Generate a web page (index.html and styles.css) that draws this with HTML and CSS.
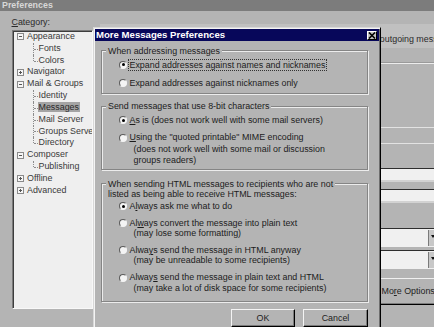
FILE: index.html
```html
<!DOCTYPE html>
<html>
<head>
<meta charset="utf-8">
<title>Preferences</title>
<link rel="stylesheet" href="styles.css">
</head>
<body>
<div class="window">
  <div class="titlebar">Preferences</div>
  <div class="main">
    <div class="sidebar">
      <div class="cat-label"><u>C</u>ategory:</div>
      <div class="tree">
        <div class="node"><span class="exp minus"></span><span class="lbl">Appearance</span></div>
        <div class="kids">
          <div class="leaf"><span class="lbl">Fonts</span></div>
          <div class="leaf"><span class="lbl">Colors</span></div>
        </div>
        <div class="node"><span class="exp plus"></span><span class="lbl">Navigator</span></div>
        <div class="node"><span class="exp minus"></span><span class="lbl">Mail &amp; Groups</span></div>
        <div class="kids">
          <div class="leaf"><span class="lbl">Identity</span></div>
          <div class="leaf"><span class="lbl sel">Messages</span></div>
          <div class="leaf"><span class="lbl">Mail Server</span></div>
          <div class="leaf"><span class="lbl">Groups Server</span></div>
          <div class="leaf"><span class="lbl">Directory</span></div>
        </div>
        <div class="node"><span class="exp minus"></span><span class="lbl">Composer</span></div>
        <div class="kids">
          <div class="leaf"><span class="lbl">Publishing</span></div>
        </div>
        <div class="node"><span class="exp plus"></span><span class="lbl">Offline</span></div>
        <div class="node"><span class="exp plus"></span><span class="lbl">Advanced</span></div>
      </div>
    </div>
    <div class="pane">
      <div class="pane-head"><span class="pane-title">Messages</span><span class="pane-desc">Settings for outgoing messages</span></div>
      <div class="rule"></div>
      <div class="hl hl-a"></div>
      <div class="hl hl-b"></div>
      <div class="field field-a"></div>
      <div class="field field-b"></div>
      <div class="combo combo-a"><span class="combo-text"></span><span class="combo-btn"><span class="tri"></span></span></div>
      <div class="combo combo-b"><span class="combo-text"></span><span class="combo-btn"><span class="tri"></span></span></div>
      <div class="more-btn">Mo<u>r</u>e Options</div>
    </div>
  </div>

  <div class="dialog">
    <div class="dlg-title">
      <span>More Messages Preferences</span>
      <span class="close"><svg width="8" height="7" viewBox="0 0 8 7"><path d="M1 0.5 L7 6.5 M7 0.5 L1 6.5" stroke="#000" stroke-width="1.6"/></svg></span>
    </div>
    <div class="dlg-body">
      <div class="group g1">
        <div class="legend"><span>When addressing messages</span></div>
        <div class="opt"><span class="radio on"></span><div class="txt"><span class="focus">Expand addresses against names and nicknames</span></div></div>
        <div class="opt"><span class="radio"></span><div class="txt">Expand addresses against nicknames only</div></div>
      </div>
      <div class="group g2">
        <div class="legend"><span>Send messages that use 8-bit characters</span></div>
        <div class="opt"><span class="radio on"></span><div class="txt"><u>A</u>s is (does not work well with some mail servers)</div></div>
        <div class="opt"><span class="radio"></span><div class="txt"><u>U</u>sing the "quoted printable" MIME encoding<div class="sub">(does not work well with some mail or discussion</div><div class="sub">groups readers)</div></div></div>
      </div>
      <div class="group g3">
        <div class="legend"><span>When sending HTML messages to recipients who are not<br>listed as being able to receive HTML messages:</span></div>
        <div class="opt"><span class="radio on"></span><div class="txt">A<u>l</u>ways ask me what to do</div></div>
        <div class="opt"><span class="radio"></span><div class="txt">Al<u>w</u>ays convert the message into plain text<div class="sub">(may lose some formatting)</div></div></div>
        <div class="opt"><span class="radio"></span><div class="txt">Alwa<u>y</u>s send the message in HTML anyway<div class="sub">(may be unreadable to some recipients)</div></div></div>
        <div class="opt"><span class="radio"></span><div class="txt">Alway<u>s</u> send the message in plain text and HTML<div class="sub">(may take a lot of disk space for some recipients)</div></div></div>
      </div>
      <div class="buttons">
        <div class="btn btn-ok">OK</div>
        <div class="btn btn-cancel">Cancel</div>
      </div>
    </div>
  </div>
</div>
</body>
</html>
```

FILE: styles.css
```css
* { box-sizing: border-box; }
html, body { margin: 0; padding: 0; overflow: hidden; }
body {
  width: 434px; height: 327px;
  background: #b4b4b4;
  font-family: "Liberation Sans", Arial, sans-serif;
  font-size: 8.9px;
  color: #1c1c1c;
}
u { text-decoration-thickness: 1px; text-underline-offset: 1px; }

.window { position: relative; width: 434px; height: 327px; overflow: hidden; background: #b4b4b4; }

.titlebar {
  height: 11px; line-height: 11px;
  background: #7c7c7c; color: #d8d8d8;
  font-weight: bold; padding-left: 2px;
}

.main { display: flex; }

/* ---------- sidebar ---------- */
.sidebar { flex: 0 0 93px; padding: 4.5px 0 0 11.5px; }
.cat-label { line-height: 12px; height: 14.5px; color: #2a2a2a; }
.tree {
  width: 81.5px; height: 279px;
  background: #efefef;
  border: 1px solid; border-color: #7a7a7a #f8f8f8 #f8f8f8 #7a7a7a;
  box-shadow: inset 1px 1px 0 #3c3c3c;
  overflow: hidden;
  line-height: 11.82px;
  color: #3a3a3a;
  white-space: nowrap;
}
.node { display: flex; align-items: center; height: 11.82px; }
.exp {
  position: relative;
  flex: 0 0 7px; height: 7px;
  margin: 0 3px 0 4.5px;
  border: 1px solid #8a8a8a; background: #f6f6f6;
}
.exp::before {
  content: ""; position: absolute; left: 1px; top: 2px; width: 3px; height: 1px; background: #555;
}
.exp.plus::after {
  content: ""; position: absolute; left: 2px; top: 1px; width: 1px; height: 3px; background: #555;
}
.kids { margin-left: 20px; }
.leaf { position: relative; height: 11.82px; padding-left: 6px; }
.leaf::before {
  content: ""; position: absolute; left: 0; top: 0; bottom: 0;
  border-left: 1px dotted #8c8c8c;
}
.leaf:last-child::before { bottom: 50%; }
.leaf::after {
  content: ""; position: absolute; left: 1px; top: 50%; width: 4px;
  border-top: 1px dotted #8c8c8c;
}
.lbl.sel { background: #a4a4a4; padding: 0 1px; margin-left: -1px; color: #2a2a2a; }

/* ---------- right pane (mostly hidden) ---------- */
.pane { flex: 0 0 360px; margin-left: 7px; }
.pane-head {
  margin-top: 13px; height: 24px;
  background: #c0c0c0;
  display: flex; padding: 9.5px 0 0 4px; line-height: 10.6px;
  white-space: nowrap; color: #2a2a2a;
}
.pane-title { flex: 0 0 228.5px; font-weight: bold; }
.rule { margin-top: 14px; height: 2px; border-top: 1px solid #9a9a9a; border-bottom: 1px solid #ececec; }
.hl { height: 1px; background: #e2e2e2; }
.hl-a { margin-top: 63px; }
.hl-b { margin-top: 15px; }
.field {
  margin-left: 150px; width: 300px; height: 14px;
  background: #f0f0f0;
  border-top: 1px solid #2e2e2e; border-bottom: 2px solid #d2d2d2;
}
.field-a { margin-top: 24px; }
.field-b { margin-top: 7px; }
.combo {
  display: flex;
  margin-left: 150px; width: 300px; height: 19px;
  background: #f0f0f0;
  border-top: 1px solid #2e2e2e; border-left: 1px solid #2e2e2e;
}
.combo-a { margin-top: 25px; }
.combo-b { margin-top: 3px; }
.combo-text { flex: 0 0 177px; }
.combo-btn {
  flex: 0 0 16px; margin: 1px 0;
  background: #c8c8c8;
  border-left: 1px solid #7a7a7a;
  display: flex; flex-direction: column; align-items: flex-start; padding: 5px 0 0 2px;
}
.tri {
  width: 0; height: 0;
  border-left: 2.5px solid transparent; border-right: 2.5px solid transparent;
  border-top: 3px solid #111;
}
.more-btn {
  margin: 9px 0 0 270px; width: 110px; height: 27px;
  border: 1px solid; border-color: #f0f0f0 #000 #000 #f0f0f0;
  box-shadow: inset -1px -1px 0 #7c7c7c;
  padding-left: 10.5px; line-height: 25px;
  white-space: nowrap; color: #222;
}

/* ---------- dialog ---------- */
.dialog {
  position: absolute; left: 93px; top: 27px;
  width: 288px; height: 310px;
  background: #b4b4b4;
  border: 1px solid; border-color: #d8d8d8 #000 #000 #d8d8d8;
  padding: 1px;
  box-shadow: inset 1px 1px 0 #f4f4f4, inset -1px -1px 0 #6e6e6e;
}
.dlg-title {
  height: 12px; line-height: 12px;
  background: #07075a; color: #fff;
  font-weight: bold; font-size: 9.6px;
  display: flex; align-items: center; justify-content: space-between;
  padding: 0 2px 0 1px;
  white-space: nowrap;
}
.close {
  width: 10px; height: 9px;
  background: #c4c4c4;
  border: 1px solid; border-color: #fff #000 #000 #fff;
  display: flex; align-items: center; justify-content: center;
}
.close svg { display: block; }

.dlg-body { padding: 9px 11px 0 6px; }

.group {
  border: 1px solid #858585;
  box-shadow: inset 1px 1px 0 #ececec, 1px 1px 0 #ececec;
  line-height: 10.6px;
}
.legend { margin-top: -5.3px; padding-left: 4px; }
.legend span {
  background: #b4b4b4; padding: 0 2px;
  -webkit-box-decoration-break: clone; box-decoration-break: clone;
}
.opt { display: flex; margin-left: 17px; white-space: nowrap; }
.radio {
  position: relative;
  flex: 0 0 8px; height: 8px;
  margin: 1.3px 2.5px 0 0;
  border-radius: 50%;
  background: #f4f4f4;
  border: 1px solid; border-color: #5a5a5a #f4f4f4 #f4f4f4 #5a5a5a;
}
.radio.on::after {
  content: ""; position: absolute; left: 1.5px; top: 1.5px;
  width: 3px; height: 3px; border-radius: 50%; background: #000;
}
.sub { padding-left: 4px; }
.focus { outline: 1px dotted #333; padding: 0 1px; margin-left: -1px; }

.g1 { padding-bottom: 4.7px; }
.g1 .legend + .opt { margin-top: 3.4px; }
.g1 .opt + .opt { margin-top: 7.4px; }

.g2 { margin-top: 12px; padding-bottom: 3px; }
.g2 .opt { line-height: 11.2px; }
.g2 .radio { margin-top: 1.6px; }
.g2 .legend { margin-top: -6px; }
.g2 .legend + .opt { margin-top: 3.3px; }
.g2 .opt + .opt { margin-top: 6.3px; }

.g3 { margin-top: 13px; padding-bottom: 8px; }
.g3 .opt { line-height: 10.3px; }
.g3 .radio { margin-top: 1.15px; }
.g3 .legend + .opt { margin-top: 1.25px; }
.g3 .opt + .opt { margin-top: 6.6px; }

.buttons { display: flex; justify-content: flex-end; gap: 8px; margin-top: 7px; }
.btn {
  height: 18px;
  border: 1px solid; border-color: #f4f4f4 #000 #000 #f4f4f4;
  box-shadow: inset -1px -1px 0 #7a7a7a;
  display: flex; align-items: center; justify-content: center;
  color: #222;
}
.btn-ok { width: 64px; }
.btn-cancel { width: 65px; }
```
